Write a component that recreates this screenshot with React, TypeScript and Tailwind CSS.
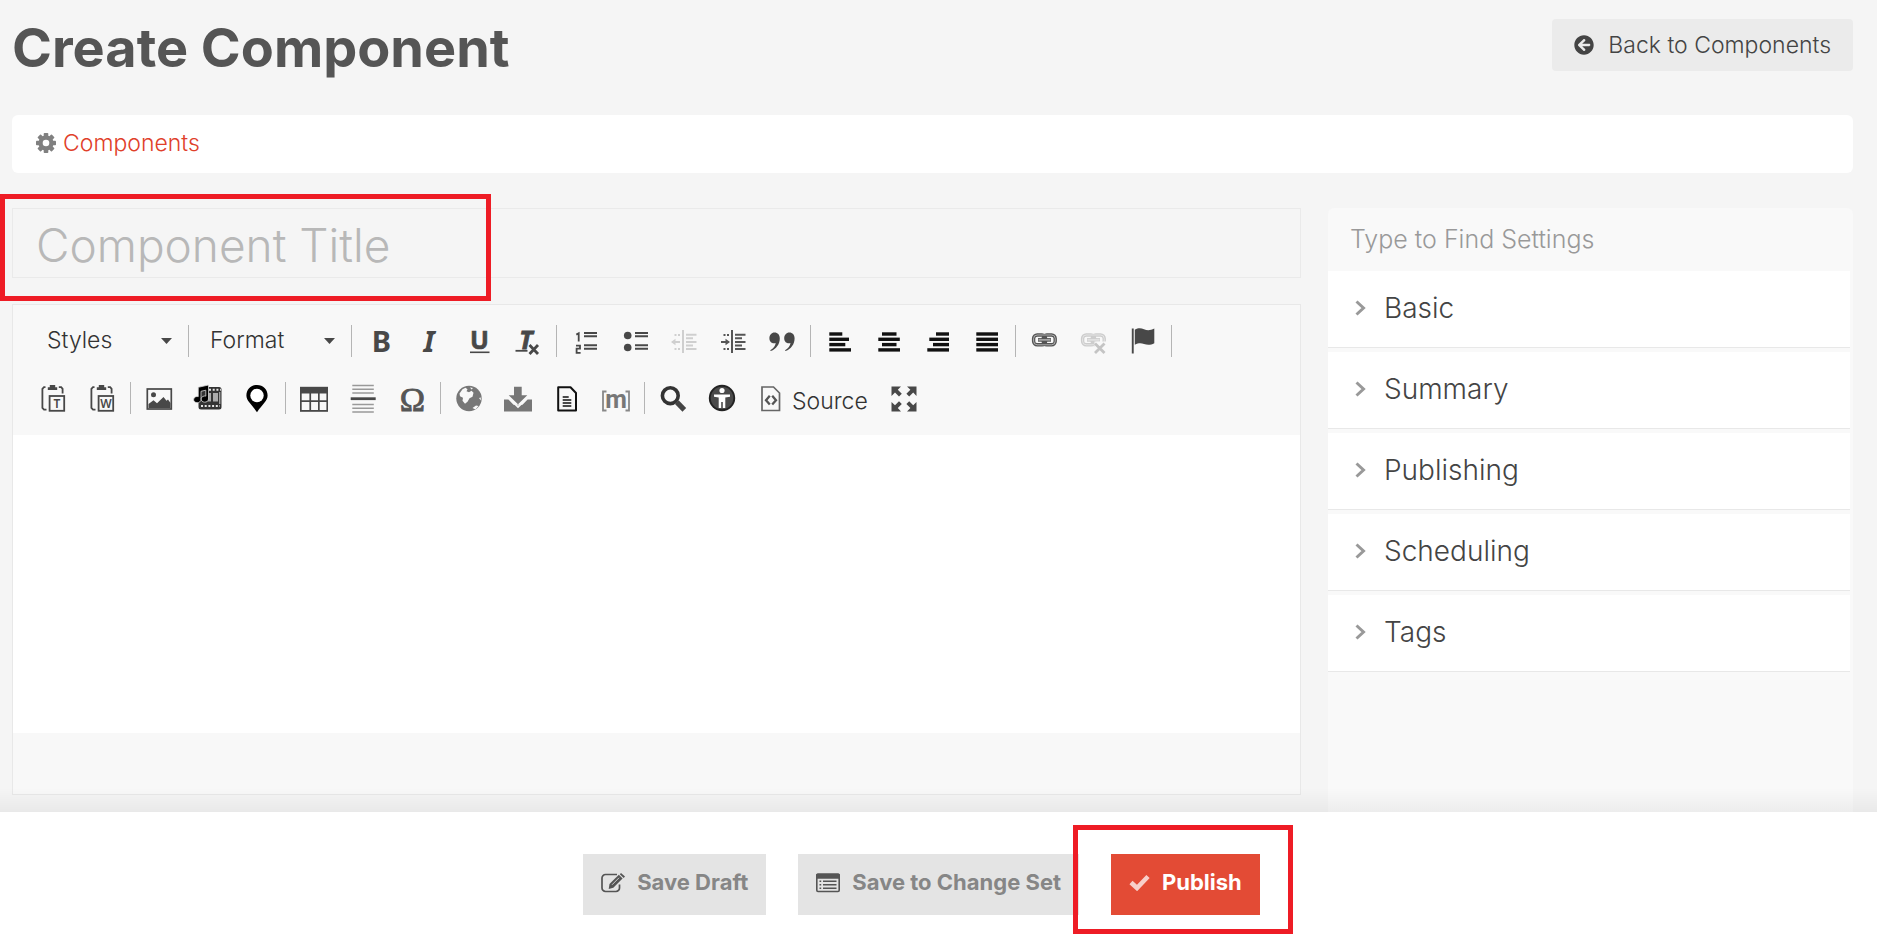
import React from "react";
import { FaArrowCircleLeft } from "react-icons/fa";

const DARK = "#484848";
const SETTINGS = ["Basic", "Summary", "Publishing", "Scheduling", "Tags"];

function Glyph({ children }: { children: React.ReactNode }) {
  return (
    <svg width="28" height="28" viewBox="0 0 28 28" className="shrink-0 overflow-visible" fill={DARK} aria-hidden="true">
      {children}
    </svg>
  );
}

function Tool({ label, children }: { label: string; children: React.ReactNode }) {
  return (
    <button type="button" aria-label={label} className="flex h-8 w-[49px] items-center justify-center">
      <Glyph>{children}</Glyph>
    </button>
  );
}

function Sep({ narrow }: { narrow?: boolean }) {
  return (
    <span className={narrow ? "flex h-8 w-2 justify-center" : "flex h-8 w-[9px] justify-center"}>
      <span className="w-px bg-[#b5b5b5]" />
    </span>
  );
}

function Combo({ label }: { label: string }) {
  return (
    <button type="button" className="flex h-8 w-[154px] items-center justify-between pl-[17px] pr-3 text-[23px] leading-8 font-light text-[#333]">
      <span className="pb-0.5">{label}</span>
      <svg width="11" height="6" viewBox="0 0 11 6" fill={DARK} aria-hidden="true">
        <path d="M0 0h11L5.5 6z" />
      </svg>
    </button>
  );
}

function ListLines({ x }: { x: number }) {
  return <path d={`M${x} 6h13M${x} 9.3h13M${x} 18.3h13M${x} 21.7h13`} stroke={DARK} strokeWidth="1.9" />;
}

function IndentShape({ color, back }: { color: string; back?: boolean }) {
  return (
    <g stroke={color} fill={color}>
      <path d="M13 3v23" strokeWidth="2" />
      <path d="M16 7.7h10.5M16 11.3h7M16 15h10.5M16 18.5h7M16 22h10.5" strokeWidth="2" />
      <path d="M4.5 8h2M8 8h2M4.5 22h2M8 22h2" strokeWidth="1.8" />
      <path d="M2 15h8" strokeWidth="2" />
      <path d={back ? "M1 15l4.5-3.3v6.6z" : "M11 15l-4.5-3.3v6.6z"} stroke="none" />
    </g>
  );
}

function Bars({ rows }: { rows: [number, number][] }) {
  return (
    <g fill="#111">
      {rows.map(([x, w], i) => (
        <rect key={i} x={x} y={5.3 + i * 5.3} width={w} height="3.4" />
      ))}
    </g>
  );
}

function Clipboard({ letter }: { letter: string }) {
  return (
    <>
      <path d="M8.8 6V3.2h2V1h5.4v2.2h2V6z" />
      <path d="M6.5 3.2H5L3.4 4.8V24L5 25.6h2.5M19.8 3.2h2.4l1.4 1.6v4.8" fill="none" stroke={DARK} strokeWidth="1.8" />
      <rect x="10.6" y="12" width="14.6" height="14.8" fill="none" stroke={DARK} strokeWidth="1.8" />
      <text x="17.9" y="23.6" textAnchor="middle" fontSize="12" className="font-['Noto_Sans'] font-semibold">{letter}</text>
    </>
  );
}

function LinkShape({ color }: { color: string }) {
  return (
    <g fill="none">
      <rect x="2.6" y="8" width="12" height="9.8" rx="3.6" stroke={color} strokeWidth="3.4" />
      <rect x="12.2" y="8" width="12" height="9.8" rx="3.6" stroke={color} strokeWidth="3.4" />
      <rect x="2.6" y="8" width="21.6" height="9.8" rx="3.6" stroke="#f8f8f8" strokeOpacity="0.55" strokeWidth="1" />
      <path d="M7 12.9h13" stroke={color} strokeWidth="3.6" />
      <path d="M7.5 12.9h12" stroke="#f8f8f8" strokeOpacity="0.7" strokeWidth="1.2" />
    </g>
  );
}

function ToolbarTop() {
  return (
    <div className="flex flex-wrap">
      <div className="flex pl-0.5">
        <Combo label="Styles" />
        <Sep />
        <Combo label="Format" />
        <Sep />
      </div>
      <Tool label="Bold">
        <text x="14.5" y="24.8" textAnchor="middle" fontSize="29" className="font-['Noto_Sans'] font-bold">B</text>
      </Tool>
      <Tool label="Italic">
        <text x="13" y="24.8" textAnchor="middle" fontSize="29" className="font-['Noto_Sans'] font-bold italic">I</text>
      </Tool>
      <Tool label="Underline">
        <text x="14.5" y="21.5" textAnchor="middle" fontSize="25" stroke={DARK} strokeWidth="0.6" className="font-['Noto_Sans'] font-bold">U</text>
        <path d="M5 25.3h19.5" stroke={DARK} strokeWidth="1.6" />
      </Tool>
      <Tool label="Remove format">
        <text x="12" y="21.5" textAnchor="middle" fontSize="25" stroke={DARK} strokeWidth="0.8" className="font-['Noto_Sans'] font-bold italic">T</text>
        <path d="M1.5 23.8h12" stroke={DARK} strokeWidth="1.8" />
        <path d="M15.5 18l8.500 9M24 18l-8.500 9" stroke={DARK} strokeWidth="2.8" />
      </Tool>
      <Sep />
      <Tool label="Numbered list">
        <path d="M4.3 7.6l2.4-1.3V14.500M4 18.6h4v3H4.6v4.3H8.6" fill="none" stroke={DARK} strokeWidth="1.8" />
        <ListLines x={12} />
      </Tool>
      <Tool label="Bulleted list">
        <circle cx="6.7" cy="8.5" r="3.8" />
        <circle cx="6.7" cy="20.5" r="3.8" />
        <ListLines x={14} />
      </Tool>
      <Tool label="Decrease indent"><IndentShape color="#cfcfcf" back /></Tool>
      <Tool label="Increase indent"><IndentShape color="#555" /></Tool>
      <Tool label="Block quote">
        <path d="M6.5 5.5c3.2 0 5.3 2.3 5.3 6 0 5.600-3.600 10.500-9 12.600l-.6-.9c3.300-2 5.200-4.400 5.500-7.300-.5.2-1 .3-1.700.3C3 16.200 1.400 14 1.400 11.200 1.400 8 3.600 5.500 6.500 5.500z" />
        <path d="M21.300 5.500c3.200 0 5.300 2.300 5.300 6 0 5.600-3.600 10.500-9 12.600l-.6-.9c3.300-2 5.200-4.400 5.500-7.300-.5.2-1 .3-1.700.3-3 0-4.600-2.200-4.600-5 0-3.200 2.200-5.700 5.100-5.700z" />
      </Tool>
      <Sep />
      <Tool label="Align left"><Bars rows={[[3.3, 13], [3.3, 19.7], [3.3, 16], [3.3, 21.7]]} /></Tool>
      <Tool label="Center"><Bars rows={[[7, 14.5], [3.3, 21.5], [7, 14.5], [3.3, 21.7]]} /></Tool>
      <Tool label="Align right"><Bars rows={[[12, 13], [5.3, 19.7], [9, 16], [3.3, 21.7]]} /></Tool>
      <Tool label="Justify"><Bars rows={[[3.3, 21.7], [3.3, 21.7], [3.3, 21.7], [3.3, 21.7]]} /></Tool>
      <Sep />
      <Tool label="Link"><LinkShape color="#555" /></Tool>
      <Tool label="Unlink">
        <LinkShape color="#cdcdcd" />
        <rect x="14.5" y="14.5" width="14" height="6" fill="#f8f8f8" />
        <path d="M15 16.5l9.500 9.500M24.500 16.5l-9.500 9.500" stroke="#c4c4c4" strokeWidth="2.8" />
      </Tool>
      <Tool label="Anchor">
        <rect x="2.8" y="1.5" width="1.9" height="25" />
        <path d="M5.800 2.800C9.500.5 12 1 15 2.300c3.500 1.400 6.500 1.200 10.300-.8v14.700c-3.500 2-7 2-10.300.8-3-1-5.500-1-9.200.7z" />
      </Tool>
      <Sep />
    </div>
  );
}

function ToolbarBottom() {
  return (
    <div className="flex flex-wrap">
      <Tool label="Paste as plain text"><Clipboard letter="T" /></Tool>
      <Tool label="Paste from Word"><Clipboard letter="W" /></Tool>
      <Sep narrow />
      <Tool label="Image">
        <rect x="2.3" y="5" width="24" height="20" fill="none" stroke={DARK} strokeWidth="1.7" />
        <circle cx="8.5" cy="10.7" r="2.5" />
        <path d="M3.500 24v-4l5-3.800 3.500 3 6.500-6.200 3 3.800 1.500-1.300 2.500 3.500V24z" />
      </Tool>
      <Tool label="Media">
        <rect x="4.5" y="3" width="23" height="22.5" rx="2.5" fill="#333" />
        <path d="M12 9h5v8.500h-5zM19 9h5v8.500h-5z" fill="#aaa" />
        <path d="M15 5.800h12M7 22h19" stroke="#e5e5e5" strokeWidth="2" strokeDasharray="2 1.700" />
        <path d="M25.800 8v12" stroke="#ccc" strokeWidth="1" />
        <path d="M4.300 3.300L14.500 1v14a3.700 3.100 0 1 1-2.700-2.900V6.200L7 7.300V15.500a3.700 3.100 0 1 1-2.700-2.900z" fill="#000" stroke="#d5d5d5" strokeWidth="0.8" />
      </Tool>
      <Tool label="Map">
        <path d="M14 1C7.800 1 3.400 5.500 3.400 11.500c0 5.300 5 8.500 10.600 16.700 5.600-8.200 10.600-11.400 10.600-16.700C24.600 5.500 20.200 1 14 1z" fill="#000" />
        <circle cx="14" cy="11.5" r="6.7" fill="#fff" />
      </Tool>
      <Sep narrow />
      <Tool label="Table">
        <path d="M0 2.800h28v25H0z" />
        <path d="M1.700 9.500h7.700v6.700H1.700zM11.100 9.500h6.900v6.700h-6.900zM19.700 9.500h6.700v6.700h-6.700zM1.700 17.900h7.700v8.200H1.700zM11.100 17.900h6.900v8.200h-6.900zM19.700 17.900h6.700v8.200h-6.700z" fill="#f8f8f8" />
      </Tool>
      <Tool label="Horizontal line">
        <path d="M3.300 1.500h21.500M3.300 5.200h21.500M3.300 9h21.500M3.300 20.500h21.500M3.300 24.300h21.500M3.300 28h21.500" stroke="#999" strokeWidth="1.4" />
        <path d="M1.700 14.700h25" stroke={DARK} strokeWidth="2.8" />
      </Tool>
      <Tool label="Special character">
        <text x="14.5" y="27" textAnchor="middle" fontSize="34" stroke="#555" strokeWidth="0.9" fill="#555" className="font-['Liberation_Serif'] font-normal">Ω</text>
      </Tool>
      <Sep narrow />
      <Tool label="Globe">
        <circle cx="14" cy="14.5" r="12.7" fill="#777" />
        <path d="M4.500 9.500l3-4.200 3-1.500 2 1.500-1 2 2.500 1 2.500-1.500 2 2-1 4-3 1.500-2 3.500-2.500 2-2.500-3 .5-3-3-1.500z" fill="#f8f8f8" />
        <path d="M15 3.500l3 .5-1.500 1.500zM17.500 24l3.500-2.500 2.500.5-3 3.500zM24 14l1.800-.5v3z" fill="#f8f8f8" />
      </Tool>
      <Tool label="Download">
        <path d="M10 2.800h7.700v8.500h5.600L14 20.300l-9.300-9h5.300z" fill="#777" />
        <path d="M0 15.500h4.500l5 5.300h9l5-5.300H28v12H0z" fill="#777" />
        <path d="M4.500 13.800l9.500 9.200 9.500-9.200" fill="none" stroke="#f8f8f8" strokeWidth="1.8" />
      </Tool>
      <Tool label="Document">
        <path d="M5.200 3.300h12.300l5.500 5.700v17.600H5.200z" fill="none" stroke="#111" strokeWidth="2" strokeLinejoin="round" />
        <path d="M9.700 13h6M9.700 16h8.600M9.700 19h8.600M9.700 22h8.600" stroke="#111" strokeWidth="1.5" />
      </Tool>
      <Tool label="Merge field">
        <path d="M4.500 7.500H1v19h3.500M23.500 7.500H27v19h-3.500" fill="none" stroke="#888" strokeWidth="1.8" />
        <text x="14" y="24" textAnchor="middle" fontSize="25" fill="#777" className="font-['Roboto'] font-bold">m</text>
      </Tool>
      <Sep narrow />
      <Tool label="Find">
        <circle cx="11.3" cy="11.7" r="7.9" fill="none" stroke="#333" strokeWidth="3.6" />
        <path d="M17.800 18.200l7.500 7.600" stroke="#444" strokeWidth="5.2" />
      </Tool>
      <Tool label="Accessibility">
        <circle cx="14" cy="14" r="13.2" fill="#222" />
        <circle cx="14" cy="14" r="11.3" fill="#4a4a4a" />
        <circle cx="14" cy="6.5" r="2.6" fill="#fff" />
        <path d="M6 10.500h16v2.300l-4.700.8V24h-2.500v-6h-1.600v6h-2.500V13.600L6 12.800z" fill="#fff" />
      </Tool>
      <button type="button" className="flex h-8 items-center gap-[7px] pl-[11px] pr-3 text-[23px] font-light text-[#333]">
        <Glyph>
          <path d="M5 3h11.500l6 6v17.500H5z" fill="none" stroke="#666" strokeWidth="1.7" />
          <path d="M12.800 11.800l-3.800 4.400 3.800 4.400M15.200 11.800l3.800 4.400-3.800 4.400" fill="none" stroke="#555" strokeWidth="2.3" />
        </Glyph>
        <span className="pt-1.5">Source</span>
      </button>
      <Tool label="Maximize">
        <path d="M1.500 2.500H11L7.800 5.700l4 4-2.800 2.800-4-4L1.500 12zM26.500 2.500V12L23.200 8.500l-4 4-2.800-2.800 4-4L17 2.500zM1.500 27.500V18L5 21.300l4-4 2.800 2.800-4 4 3.200 3.400zM26.500 27.500H17l3.400-3.400-4-4 2.800-2.800 4 4 3.300-3.300z" />
      </Tool>
    </div>
  );
}

function GearIcon() {
  return (
    <svg width="20" height="20" viewBox="0 0 20 20" aria-hidden="true">
      <g fill="#808080">
        {[0, 45, 90, 135].map((angle) => (
          <rect key={angle} x="7.7" y="0" width="4.6" height="20" rx="0.8" transform={`rotate(${angle} 10 10)`} />
        ))}
        <circle cx="10" cy="10" r="7.6" />
      </g>
      <circle cx="10" cy="10" r="3.3" fill="#fff" />
    </svg>
  );
}

function ChevronIcon() {
  return (
    <svg width="11" height="16" viewBox="0 0 11 16" fill="none" aria-hidden="true">
      <path d="M1.500 1.500L8.500 8l-7 6.500" stroke="#999" strokeWidth="3" />
    </svg>
  );
}

function CheckIcon() {
  return (
    <svg width="21" height="17" viewBox="0 0 21 17" fill="none" aria-hidden="true">
      <path d="M2 8.500l6 5.500L19 2.500" stroke="#f8cfc9" strokeWidth="4.6" />
    </svg>
  );
}

function EditIcon() {
  return (
    <svg width="24" height="20" viewBox="0 0 24 20" fill="none" aria-hidden="true">
      <path d="M18.500 11.500V15a3.500 3.500 0 0 1-3.500 3.500H4.500A3.500 3.500 0 0 1 1 15V5a3.500 3.500 0 0 1 3.500-3.500H16" stroke="#555" strokeWidth="1.7" />
      <path d="M8.500 11L17.800 1.800l3.800 3.600-9.300 9.300-4.600 1.300z" fill="#555" />
      <path d="M18.800 1.200L20 0l4 3.600-1.300 1.500z" fill="#555" />
      <path d="M11 11.800l7-7" stroke="#ddd" strokeWidth="0.9" />
    </svg>
  );
}

function ListAltIcon() {
  return (
    <svg width="24" height="20" viewBox="0 0 24 20" aria-hidden="true">
      <rect x="0.8" y="1.3" width="22.4" height="17.2" rx="1.2" fill="none" stroke="#555" strokeWidth="1.6" />
      <path d="M0 2a1.500 1.500 0 0 1 1.500-1.500h21A1.500 1.500 0 0 1 24 2v3.800H0z" fill="#555" />
      <path d="M3.500 8.300h1.700M3.500 11.800h1.700M3.500 15.300h1.700M7 8.300h13.500M7 11.800h13.500M7 15.300h13.500" stroke="#555" strokeWidth="1.5" />
    </svg>
  );
}

export default function App() {
  return (
    <div className="flex h-screen flex-col overflow-hidden bg-[#f5f5f5] font-['Inter',sans-serif] text-[#555]">
      <main className="flex min-h-0 flex-1 flex-col pl-3 pr-6">
        <header className="flex h-[115px] shrink-0 items-start justify-between pt-[19px]">
          <h1 className="text-[54px] leading-[58px] font-bold text-[#555]">Create Component</h1>
          <a href="#components" className="flex h-[52px] items-center gap-3.5 rounded bg-[#ebebeb] px-[22px] text-[23px] font-light text-[#444]">
            <FaArrowCircleLeft className="size-5" />
            Back to Components
          </a>
        </header>

        <nav className="flex h-[58px] shrink-0 items-center gap-[7px] rounded-md bg-white px-6 pb-0.5 text-[23px] font-light" aria-label="Breadcrumb">
          <GearIcon />
          <a href="#components" className="text-[#e0402a]">Components</a>
        </nav>

        <div className="flex min-h-0 flex-1 gap-[27px] pt-[35px]">
          <section className="min-w-0 flex-1">
            <div className="relative">
              <input
                aria-label="Component Title"
                placeholder="Component Title"
                className="block h-[70px] w-full border border-[#eaeaea] bg-transparent px-[23px] pt-1 text-[46px] font-light placeholder:text-[#b8b8b8]"
              />
              <div className="pointer-events-none absolute -top-3.5 -left-3 h-[107px] w-[491px] border-5 border-[#ee1c25]" />
            </div>

            <div className="mt-[26px] border border-[#e8e8e8] bg-[#f8f8f8]">
              <div className="flex flex-col gap-[25px] px-[15px] pt-5 pb-[21px]">
                <ToolbarTop />
                <ToolbarBottom />
              </div>
              <textarea aria-label="Content" className="block h-[298px] w-full resize-none bg-white p-4 text-[23px] font-light" />
              <div className="h-[61px]" />
            </div>
          </section>

          <aside className="w-[525px] shrink-0 rounded-t-md bg-[#f9f9f9]">
            <input
              aria-label="Type to Find Settings"
              placeholder="Type to Find Settings"
              className="block h-[63px] w-full bg-transparent px-[22px] pb-0.5 text-[25px] font-light placeholder:text-[#999]"
            />
            <div className="flex flex-col gap-1 pr-[3px]">
              {SETTINGS.map((name) => (
                <button
                  key={name}
                  type="button"
                  className="flex h-[77px] items-center gap-[18px] border-b border-[#e8e8e8] bg-white px-[27px] pb-0.5 text-left text-[28px] font-light text-[#444]"
                >
                  <ChevronIcon />
                  {name}
                </button>
              ))}
            </div>
          </aside>
        </div>
      </main>

      <footer className="relative z-10 flex h-[126px] shrink-0 items-center justify-center gap-8 bg-white pr-[34px] text-[22px] font-bold">
        <div className="pointer-events-none absolute inset-x-0 bottom-full h-6 bg-linear-to-t from-black/5 to-transparent" />
        <button type="button" className="mt-[19px] flex h-[61px] items-center gap-3 bg-[#e4e4e4] px-[18px] pb-1 text-[#868686]">
          <EditIcon />
          Save Draft
        </button>
        <button type="button" className="mt-[19px] flex h-[61px] items-center gap-3 bg-[#e4e4e4] px-[18px] pb-1 text-[#868686]">
          <ListAltIcon />
          Save to Change Set
        </button>
        <div className="relative mt-[19px]">
          <button type="button" className="flex h-[61px] items-center gap-3 bg-[#e34b35] px-[18px] pb-1 text-white">
            <CheckIcon />
            Publish
          </button>
          <div className="pointer-events-none absolute -top-[29px] -right-[33px] -bottom-[19px] -left-[38px] border-5 border-[#ee1c25]" />
        </div>
      </footer>
    </div>
  );
}
